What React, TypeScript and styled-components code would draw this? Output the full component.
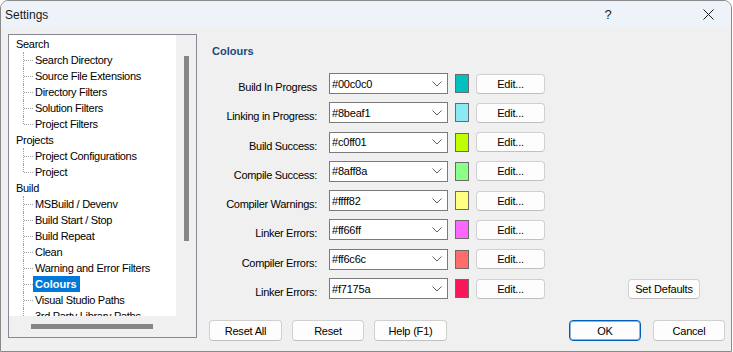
import React from 'react'
import styled, { createGlobalStyle } from 'styled-components'

const GlobalStyle = createGlobalStyle`
  html, body {
    margin: 0;
    padding: 0;
    background: #ffffff;
  }
  body {
    font-family: "Liberation Sans", Arial, sans-serif;
    font-size: 11px;
    color: #000;
  }
`

const Window = styled.div`
  width: 732px;
  height: 352px;
  box-sizing: border-box;
  border: 1px solid #8a8a8a;
  border-radius: 8px 8px 0 0;
  background: #f0f0f0;
  display: flex;
  flex-direction: column;
  overflow: hidden;
`

const TitleBar = styled.div`
  height: 27px;
  flex-shrink: 0;
  background: #eef3f9;
  display: flex;
  align-items: center;
  padding-left: 4px;
`

const Title = styled.span`
  font-size: 12px;
  color: #1a1a1a;
  flex: 1;
`

const CaptionButton = styled.div<{ $gap?: number }>`
  width: 46px;
  height: 27px;
  display: flex;
  align-items: center;
  justify-content: center;
  margin-right: ${(p) => p.$gap ?? 0}px;
  font-size: 13px;
  color: #1a1a1a;
`

const Body = styled.div`
  flex: 1;
  display: flex;
  padding: 6px 6px 10px 7px;
  min-height: 0;
`

/* ---------- tree ---------- */

const TreeBox = styled.div`
  width: 189px;
  height: 304px;
  flex-shrink: 0;
  box-sizing: border-box;
  border: 1px solid #858a92;
  background: #f0f0f0;
  display: grid;
  grid-template-columns: 167px 1fr;
  grid-template-rows: 281px 1fr;
`

const TreeList = styled.div`
  background: #fff;
  overflow: hidden;
  padding-top: 1px;
`

const TreeRow = styled.div`
  height: 16px;
  line-height: 16px;
  display: flex;
  white-space: nowrap;
  letter-spacing: -0.3px;
`

const RootLabel = styled.span`
  padding-left: 7px;
`

const Connector = styled.span<{ $last?: boolean }>`
  position: relative;
  width: 10px;
  height: 16px;
  margin-left: 14px;
  flex-shrink: 0;

  &::before {
    content: '';
    position: absolute;
    left: 0;
    top: 0;
    bottom: ${(p) => (p.$last ? '8px' : '0')};
    border-left: 1px dotted #a0a0a0;
  }

  &::after {
    content: '';
    position: absolute;
    left: 1px;
    right: 0;
    top: 8px;
    border-top: 1px dotted #a0a0a0;
  }
`

const ChildLabel = styled.span<{ $selected?: boolean }>`
  padding: 0 3px 0 2px;
  background: ${(p) => (p.$selected ? '#0078d7' : 'transparent')};
  color: ${(p) => (p.$selected ? '#fff' : '#000')};
  font-weight: ${(p) => (p.$selected ? 'bold' : 'normal')};
  letter-spacing: ${(p) => (p.$selected ? '0' : '-0.3px')};
`

const VTrack = styled.div`
  display: flex;
  justify-content: center;
  padding-top: 21px;
`

const VThumb = styled.div`
  width: 5px;
  height: 185px;
  background: #868686;
`

const HTrack = styled.div`
  display: flex;
  align-items: center;
  padding-left: 22px;
`

const HThumb = styled.div`
  width: 122px;
  height: 5px;
  background: #868686;
`

/* ---------- right panel ---------- */

const Panel = styled.div`
  flex: 1;
  margin-left: 12px;
  display: flex;
  flex-direction: column;
`

const Heading = styled.div`
  margin: 10px 0 0 3px;
  line-height: 14px;
  font-weight: bold;
  color: #1a4a7a;
`

const Rows = styled.div`
  margin-top: 15px;
  display: flex;
  flex-direction: column;
  gap: 8.3px;
`

const Row = styled.div`
  height: 21px;
  display: flex;
  align-items: center;
`

const Label = styled.span`
  width: 120px;
  box-sizing: border-box;
  padding-right: 12px;
  text-align: right;
  align-self: flex-end;
  line-height: 14px;
  letter-spacing: -0.3px;
  white-space: nowrap;
`

const Combo = styled.div`
  width: 119px;
  height: 21px;
  box-sizing: border-box;
  border: 1px solid #7a7a7a;
  background: #fff;
  display: flex;
  align-items: center;
  justify-content: space-between;
  padding: 0 5px 0 2px;
  letter-spacing: -0.2px;
`

const Swatch = styled.div<{ $color: string }>`
  width: 14px;
  height: 19px;
  box-sizing: border-box;
  margin-left: 7px;
  border: 1px solid #6a6a6a;
  background: ${(p) => p.$color};
`

const Button = styled.button<{ $w: number; $default?: boolean }>`
  width: ${(p) => p.$w}px;
  height: 21px;
  box-sizing: border-box;
  padding: 0;
  font-family: "Liberation Sans", Arial, sans-serif;
  font-size: 11px;
  letter-spacing: -0.2px;
  color: #000;
  background: #fdfdfd;
  border: 1px solid ${(p) => (p.$default ? '#005fb8' : '#d0d0d0')};
  border-bottom-color: ${(p) => (p.$default ? '#005fb8' : '#c0c0c0')};
  box-shadow: ${(p) => (p.$default ? 'inset 0 0 0 1px rgba(0, 95, 184, 0.45)' : 'none')};
  border-radius: 4px;
  flex-shrink: 0;
`

const EditButton = styled(Button)`
  height: 20px;
  margin-left: 7px;
`

const DefaultsButton = styled(Button)`
  height: 20px;
  margin-left: auto;
  margin-right: 25px;
`

const CancelButton = styled(Button)`
  margin-left: 2px;
`

const Footer = styled.div`
  margin-top: auto;
  display: flex;
  align-items: center;
  gap: 10px;
`

const Spacer = styled.div`
  flex: 1;
`

const Chevron = () => (
  <svg width="10" height="6" viewBox="0 0 10 6">
    <polyline points="0.5,0.5 5,5 9.5,0.5" fill="none" stroke="#606060" strokeWidth="1" />
  </svg>
)

const CloseIcon = () => (
  <svg width="11" height="11" viewBox="0 0 11 11">
    <path d="M0.5 0.5 L10.5 10.5 M10.5 0.5 L0.5 10.5" stroke="#1a1a1a" strokeWidth="1" />
  </svg>
)

type TreeNode = { label: string; children: string[]; open?: boolean }

const tree: TreeNode[] = [
  {
    label: 'Search',
    children: ['Search Directory', 'Source File Extensions', 'Directory Filters', 'Solution Filters', 'Project Filters'],
  },
  { label: 'Projects', children: ['Project Configurations', 'Project'] },
  {
    label: 'Build',
    open: true,
    children: [
      'MSBuild / Devenv',
      'Build Start / Stop',
      'Build Repeat',
      'Clean',
      'Warning and Error Filters',
      'Colours',
      'Visual Studio Paths',
      '3rd Party Library Paths',
    ],
  },
]

const colours = [
  { label: 'Build In Progress', value: '#00c0c0' },
  { label: 'Linking in Progress:', value: '#8beaf1' },
  { label: 'Build Success:', value: '#c0ff01' },
  { label: 'Compile Success:', value: '#8aff8a' },
  { label: 'Compiler Warnings:', value: '#ffff82' },
  { label: 'Linker Errors:', value: '#ff66ff' },
  { label: 'Compiler Errors:', value: '#ff6c6c' },
  { label: 'Linker Errors:', value: '#f7175a' },
]

export default function App() {
  return (
    <>
      <GlobalStyle />
      <Window>
        <TitleBar>
          <Title>Settings</Title>
          <CaptionButton $gap={54}>?</CaptionButton>
          <CaptionButton>
            <CloseIcon />
          </CaptionButton>
        </TitleBar>

        <Body>
          <TreeBox>
            <TreeList>
              {tree.map((node) => (
                <React.Fragment key={node.label}>
                  <TreeRow>
                    <RootLabel>{node.label}</RootLabel>
                  </TreeRow>
                  {node.children.map((child, i) => (
                    <TreeRow key={child}>
                      <Connector $last={!node.open && i === node.children.length - 1} />
                      <ChildLabel $selected={child === 'Colours'}>{child}</ChildLabel>
                    </TreeRow>
                  ))}
                </React.Fragment>
              ))}
            </TreeList>
            <VTrack>
              <VThumb />
            </VTrack>
            <HTrack>
              <HThumb />
            </HTrack>
            <div />
          </TreeBox>

          <Panel>
            <Heading>Colours</Heading>
            <Rows>
              {colours.map((c, i) => (
                <Row key={i}>
                  <Label>{c.label}</Label>
                  <Combo>
                    <span>{c.value}</span>
                    <Chevron />
                  </Combo>
                  <Swatch $color={c.value} />
                  <EditButton $w={69}>Edit...</EditButton>
                  {i === colours.length - 1 && <DefaultsButton $w={72}>Set Defaults</DefaultsButton>}
                </Row>
              ))}
            </Rows>
            <Footer>
              <Button $w={73}>Reset All</Button>
              <Button $w={72}>Reset</Button>
              <Button $w={73}>Help (F1)</Button>
              <Spacer />
              <Button $w={72} $default>
                OK
              </Button>
              <CancelButton $w={72}>Cancel</CancelButton>
            </Footer>
          </Panel>
        </Body>
      </Window>
    </>
  )
}
